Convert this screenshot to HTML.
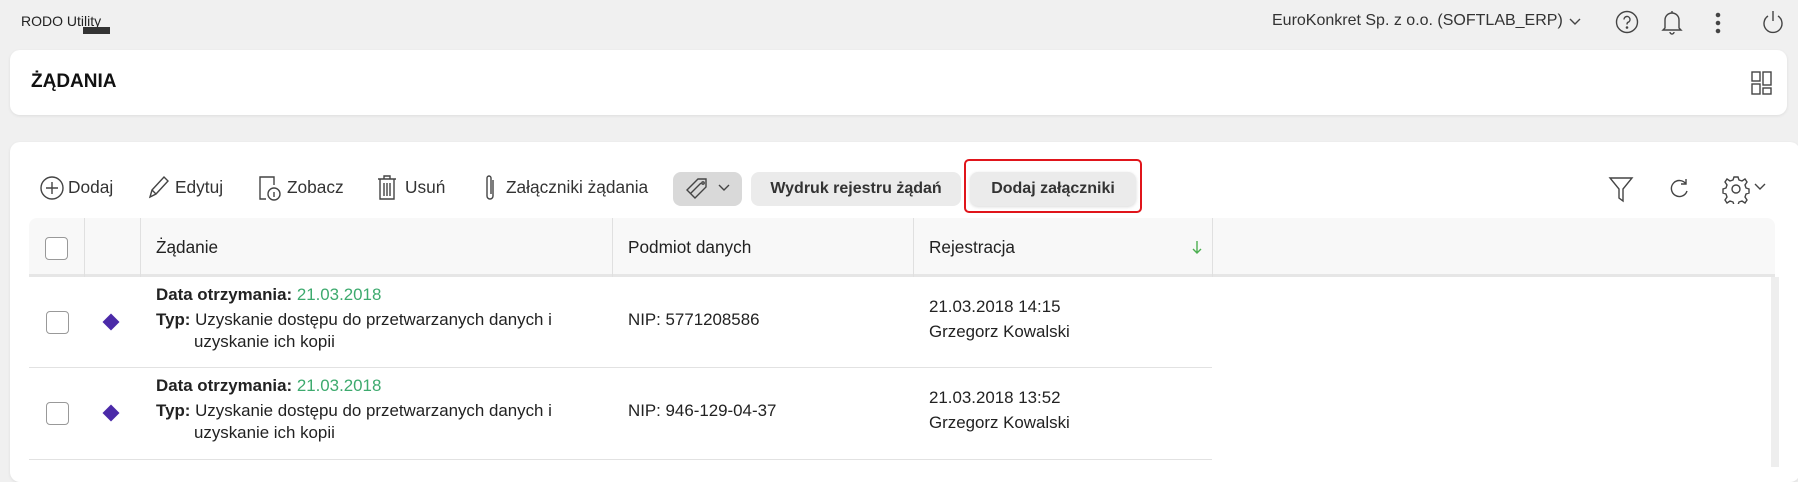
<!DOCTYPE html>
<html><head><meta charset="utf-8"><style>
*{box-sizing:border-box;margin:0;padding:0}
body{width:1798px;height:464px;background:#f0f0f0;font-family:"Liberation Sans",sans-serif;color:#222;position:relative;overflow:hidden}
.a{position:absolute;white-space:nowrap}
.card{position:absolute;background:#fff;border-radius:10px;box-shadow:0 1px 3px rgba(0,0,0,.08)}
.tb{font-size:17.3px;color:#333;top:177px}
.btn{position:absolute;background:#ebebeb;border-radius:8px;font-size:16px;color:#333;display:flex;align-items:center;justify-content:center;font-weight:bold}
.th{font-size:17.2px;color:#222;top:237px}
.cb{position:absolute;width:23px;height:23px;border:1px solid #999;border-radius:4px;background:#fff}
.vl{position:absolute;top:218px;height:59px;width:1px;background:#e0e0e0}
.t{font-size:16.9px;color:#222}
.dm{position:absolute;width:12px;height:12px;background:#4b2aa8;transform:rotate(45deg)}
svg{position:absolute;fill:none;stroke:#444;stroke-width:1.4}
</style></head><body>
<div class="a" style="left:21px;top:13px;font-size:14px;color:#222">RODO Utility</div>
<div class="a" style="left:83px;top:27px;width:27px;height:7px;background:#333"></div>
<div class="a" style="left:1272px;top:12px;font-size:16px;color:#333">EuroKonkret Sp. z o.o. (SOFTLAB_ERP)</div>
<svg style="left:1568px;top:17px" width="14" height="10" viewBox="0 0 14 10"><path d="M2 2l5 5 5-5"/></svg>
<svg style="left:1614px;top:9px" width="26" height="26" viewBox="0 0 26 26"><circle cx="13" cy="13" r="10.5"/><path d="M10 10.5a3 3 0 1 1 4 2.8c-1 .5-1 1.2-1 2.2"/><circle cx="13" cy="18.5" r=".6" fill="#444"/></svg>
<svg style="left:1660px;top:8px" width="24" height="28" viewBox="0 0 24 28"><path d="M5 20V12a7 7 0 0 1 14 0v8l2 2H3z M10 24a2 2 0 0 0 4 0 M12 3v2"/></svg>
<svg style="left:1712px;top:10px" width="12" height="26" viewBox="0 0 12 26"><circle cx="6" cy="5" r="1.6" fill="#444"/><circle cx="6" cy="13" r="1.6" fill="#444"/><circle cx="6" cy="21" r="1.6" fill="#444"/></svg>
<svg style="left:1760px;top:8px" width="26" height="28" viewBox="0 0 26 28"><path d="M8 8a9 9 0 1 0 10 0 M13 3v10"/></svg>

<div class="card" style="left:10px;top:50px;width:1777px;height:65px"></div>
<div class="a" style="left:31px;top:71px;font-size:19px;font-weight:bold;color:#111">ŻĄDANIA</div>
<svg style="left:1751px;top:71px" width="22" height="24" viewBox="0 0 22 24"><rect x="1" y="1" width="8" height="9"/><rect x="12" y="1" width="8" height="13"/><rect x="1" y="13" width="8" height="10"/><rect x="12" y="17" width="8" height="6"/></svg>

<div class="card" style="left:10px;top:142px;width:1790px;height:340px"></div>
<svg style="left:39px;top:175px" width="26" height="26" viewBox="0 0 26 26"><circle cx="13" cy="13" r="11"/><path d="M13 7v12M7 13h12"/></svg>
<div class="a tb" style="left:68px">Dodaj</div>
<svg style="left:147px;top:174px" width="24" height="26" viewBox="0 0 24 26"><path d="M3 23l2-7L17 3l4 4L9 20z M5 16l4 4"/></svg>
<div class="a tb" style="left:175px">Edytuj</div>
<svg style="left:257px;top:173px" width="26" height="30" viewBox="0 0 26 30"><path d="M9 26H3V4h14v8"/><circle cx="17" cy="21" r="6"/><path d="M17 19v5"/></svg>
<div class="a tb" style="left:287px">Zobacz</div>
<svg style="left:376px;top:173px" width="22" height="28" viewBox="0 0 22 28"><path d="M2 6h18M8 6V3h6v3M4 6v20h14V6M8 10v13M11 10v13M14 10v13"/></svg>
<div class="a tb" style="left:405px">Usuń</div>
<svg style="left:482px;top:173px" width="16" height="30" viewBox="0 0 16 30"><path d="M11 7v16a3 3 0 0 1-6 0V5a2 2 0 0 1 4 0v16"/></svg>
<div class="a tb" style="left:506px">Załączniki żądania</div>
<div class="btn" style="left:673px;top:172px;width:69px;height:34px;background:#d9d9d9"></div>
<svg style="left:684px;top:176px" width="30" height="26" viewBox="0 0 30 26"><path d="M3 14L14 3h8v8L11 22z M7 17l10-10"/><circle cx="19" cy="7" r="1.2"/></svg>
<svg style="left:718px;top:184px" width="12" height="8" viewBox="0 0 12 8"><path d="M1 1l5 5 5-5"/></svg>
<div class="btn" style="left:751px;top:172px;width:210px;height:34px">Wydruk rejestru żądań</div>
<div class="a" style="left:964px;top:159px;width:178px;height:54px;border:2px solid #e0151b;border-radius:5px"></div>
<div class="btn" style="left:970px;top:172px;width:166px;height:34px;box-shadow:0 1px 3px rgba(0,0,0,.15)">Dodaj załączniki</div>
<svg style="left:1608px;top:175px" width="26" height="30" viewBox="0 0 26 30"><path d="M2 3h22l-9 11v12l-4-3V14z"/></svg>
<svg style="left:1667px;top:176px" width="24" height="26" viewBox="0 0 24 26"><path d="M19 8a8 8 0 1 0 1 7 M19 3v5h-5"/></svg>
<svg style="left:1722px;top:174px" width="28" height="30" viewBox="0 0 28 30"><circle cx="14" cy="15" r="4"/><path d="M12 3h4l1 3 3 1 3-2 2 3-2 3 1 3 3 1v4l-3 1-1 3 2 3-2 3-3-2-3 1-1 3h-4l-1-3-3-1-3 2-2-3 2-3-1-3-3-1v-4l3-1 1-3-2-3 2-3 3 2 3-1z"/></svg>
<svg style="left:1754px;top:183px" width="12" height="9" viewBox="0 0 12 9"><path d="M1 1l5 5 5-5"/></svg>

<div class="a" style="left:29px;top:218px;width:1746px;height:59px;background:#f8f8f8;border-radius:8px 8px 0 0;border-bottom:3px solid #e6e6e6"></div>
<div class="vl" style="left:84px"></div><div class="vl" style="left:140px"></div><div class="vl" style="left:612px"></div><div class="vl" style="left:913px"></div><div class="vl" style="left:1212px"></div>
<div class="cb" style="left:45px;top:237px"></div>
<div class="a th" style="left:156px">Żądanie</div>
<div class="a th" style="left:628px">Podmiot danych</div>
<div class="a th" style="left:929px">Rejestracja</div>
<svg style="left:1190px;top:239px;stroke:#4caf50" width="14" height="16" viewBox="0 0 14 16"><path d="M7 2v12M3 10l4 4 4-4"/></svg>
<div class="a" style="left:1771px;top:277px;width:8px;height:190px;background:#eee"></div>

<div class="a" style="left:29px;top:367px;width:1183px;height:1px;background:#e2e2e2"></div>
<div class="a" style="left:29px;top:459px;width:1183px;height:1px;background:#e2e2e2"></div>

<div class="cb" style="left:46px;top:311px"></div>
<div class="dm" style="left:105px;top:316px"></div>
<div class="a t" style="left:156px;top:285px"><b>Data otrzymania:</b> <span style="color:#3daa6e">21.03.2018</span></div>
<div class="a t" style="left:156px;top:310px"><b>Typ:</b> Uzyskanie dostępu do przetwarzanych danych i</div>
<div class="a t" style="left:194px;top:332px">uzyskanie ich kopii</div>
<div class="a t" style="left:628px;top:310px">NIP: 5771208586</div>
<div class="a t" style="left:929px;top:297px">21.03.2018 14:15</div>
<div class="a t" style="left:929px;top:322px">Grzegorz Kowalski</div>

<div class="cb" style="left:46px;top:402px"></div>
<div class="dm" style="left:105px;top:407px"></div>
<div class="a t" style="left:156px;top:376px"><b>Data otrzymania:</b> <span style="color:#3daa6e">21.03.2018</span></div>
<div class="a t" style="left:156px;top:401px"><b>Typ:</b> Uzyskanie dostępu do przetwarzanych danych i</div>
<div class="a t" style="left:194px;top:423px">uzyskanie ich kopii</div>
<div class="a t" style="left:628px;top:401px">NIP: 946-129-04-37</div>
<div class="a t" style="left:929px;top:388px">21.03.2018 13:52</div>
<div class="a t" style="left:929px;top:413px">Grzegorz Kowalski</div>
</body></html>
